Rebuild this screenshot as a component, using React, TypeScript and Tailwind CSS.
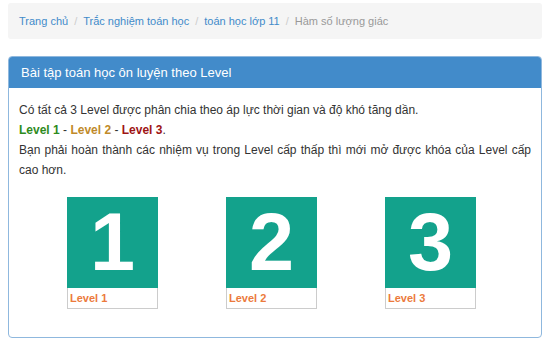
export default function App() {
  const crumbs = ["Trang chủ", "Trắc nghiệm toán học", "toán học lớp 11"];
  const levels = ["1", "2", "3"];
  return (
    <div className="w-[550px] h-[340px] bg-white px-2 pt-[3px] font-['Liberation_Sans',Arial,sans-serif] overflow-hidden">
      <div className="h-9 bg-[#f5f5f5] rounded-[3px] flex items-center px-[11px] text-[11px]">
        {crumbs.map((c) => (
          <span key={c} className="flex items-center">
            <span className="text-[#428bca]">{c}</span>
            <span className="text-[#ccc] px-[6px]">/</span>
          </span>
        ))}
        <span className="text-[#999]">Hàm số lượng giác</span>
      </div>

      <div className="mt-[17px] border border-[#8fb8de] rounded-[4px] h-[282px]">
        <div className="bg-[#428bca] h-[31px] flex items-center px-3 text-white text-[13px] rounded-t-[3px]">
          Bài tập toán học ôn luyện theo Level
        </div>
        <div className="px-[10px] pt-3 text-[12px] leading-5 text-[#333]">
          <p>Có tất cả 3 Level được phân chia theo áp lực thời gian và độ khó tăng dần.</p>
          <p>
            <b className="text-[#2e8b1e]">Level 1</b> - <b className="text-[#c08a2a]">Level 2</b> -{" "}
            <b className="text-[#9e1414]">Level 3</b>.
          </p>
          <p className="text-justify">
            Bạn phải hoàn thành các nhiệm vụ trong Level cấp thấp thì mới mở được khóa của Level cấp cao hơn.
          </p>
          <div className="flex gap-[68px] ml-[48px] mt-[17px]">
            {levels.map((n) => (
              <div key={n} className="w-[91px]">
                <div className="h-[91px] bg-[#13a28c] flex items-center justify-center text-white font-bold text-[81px] leading-none">
                  {n}
                </div>
                <div className="h-[21px] border border-t-0 border-[#ccc] flex items-center px-[2px] text-[11px] font-bold text-[#ec7a3c]">
                  Level {n}
                </div>
              </div>
            ))}
          </div>
        </div>
      </div>
    </div>
  );
}
